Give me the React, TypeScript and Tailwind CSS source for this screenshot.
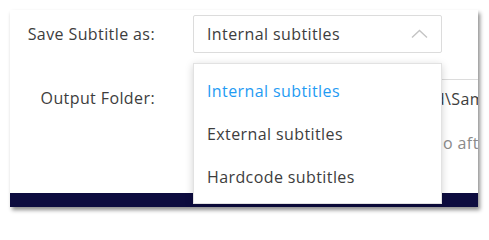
import React from 'react';

const font = { fontFamily: '"Open Sans", "Liberation Sans", sans-serif' };

const App: React.FC = () => {
  return (
    <div className="w-[489px] h-[219px] bg-white p-[10px] overflow-hidden" style={font}>
      {/* Settings card */}
      <div className="relative w-[468px] h-[197px] bg-white shadow-[2px_3px_4px_rgba(0,0,0,0.45)] flex flex-col overflow-hidden text-[16px] tracking-[0.4px]">
        <div className="flex-1 flex flex-col pt-[5px]">
          {/* Save subtitle row */}
          <div className="flex items-center h-[38px]">
            <div className="w-[145px] shrink-0 text-right text-[#3d3d3d] whitespace-nowrap">Save Subtitle as:</div>
            <div className="ml-[38px] w-[249px] shrink-0 h-[38px] border border-[#dcdcdc] rounded-[2px] flex items-center justify-between pl-[13px] pr-[13px] text-[#3d3d3d]">
              <span>Internal subtitles</span>
              <svg width="17" height="10" viewBox="0 0 17 10" fill="none" stroke="#c4c4c4" strokeWidth="1.4">
                <path d="M1 8.5 L8.5 1.5 L16 8.5" />
              </svg>
            </div>
          </div>

          {/* Output folder row */}
          <div className="flex items-center h-[38px] mt-[26px]">
            <div className="w-[145px] shrink-0 text-right text-[#3d3d3d] whitespace-nowrap">Output Folder:</div>
            <div className="ml-[38px] w-[320px] shrink-0 h-[38px] border-t border-[#dcdcdc] flex items-center text-[#3d3d3d] whitespace-nowrap">
              <span className="w-[252px] shrink-0 text-right overflow-hidden">D:\Videos\Converted</span>
              <span>\Sample</span>
            </div>
          </div>

          {/* Open after row */}
          <div className="flex items-center h-[20px] mt-[16px] text-[#8a8a8a] whitespace-nowrap">
            <span className="w-[433px] shrink-0 text-right">Open the output vide</span>
            <span>o after conversion</span>
          </div>
        </div>
        <div className="h-[14px] bg-[#0d0c3f]" />

        {/* Open dropdown menu */}
        <div className="absolute left-[183px] top-[53px] w-[249px] h-[141px] bg-white border border-[#e2e2e2] shadow-[0_2px_8px_rgba(0,0,0,0.18)] flex flex-col pt-[5px]">
          <div className="h-[43px] shrink-0 flex items-center pl-[13px] text-[#1f9bf3]">Internal subtitles</div>
          <div className="h-[43px] shrink-0 flex items-center pl-[13px] text-[#3d3d3d]">External subtitles</div>
          <div className="h-[43px] shrink-0 flex items-center pl-[13px] text-[#3d3d3d]">Hardcode subtitles</div>
        </div>
      </div>
    </div>
  );
};

export default App;
